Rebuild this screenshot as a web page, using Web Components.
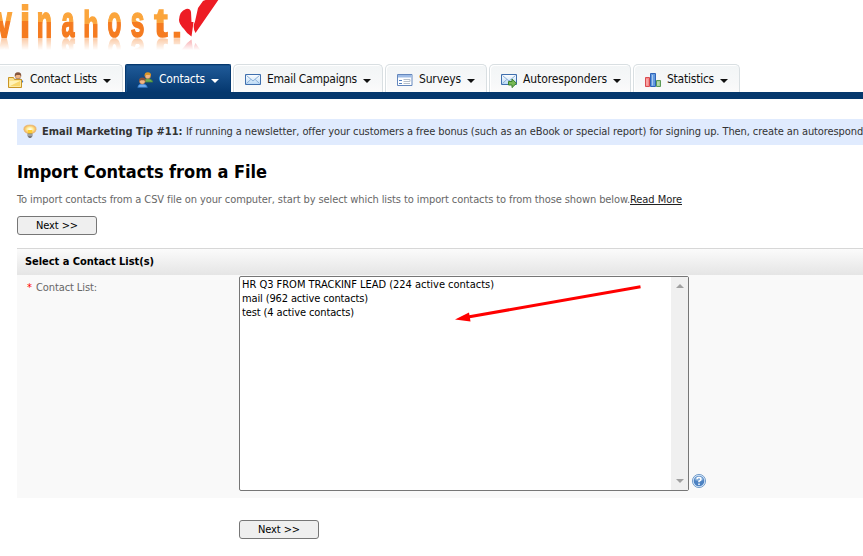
<!DOCTYPE html>
<html lang="en">
<head>
<meta charset="utf-8">
<title>Import Contacts from a File</title>
<style>
html,body{margin:0;height:100%;overflow:hidden;background:#fff}
body{font:11px/14px "DejaVu Sans Condensed","DejaVu Sans",sans-serif;font-stretch:condensed;color:#333}
</style>
</head>
<body>
<mail-page></mail-page>
<script>
const define = (name, html, ready) => customElements.define(name, class extends HTMLElement {
  connectedCallback() {
    if (this.shadowRoot) return;
    this.attachShadow({mode: 'open'}).innerHTML = html;
    if (ready) ready(this, this.shadowRoot);
  }
});

// One line of text whose tracking is adjusted to fill the width in "w".
define('fit-text', `<style>:host{display:block;white-space:pre;flex:none}span{display:inline-block}:host([underline]) span{text-decoration:underline;text-underline-offset:1px;text-decoration-skip-ink:none}</style><span><slot></slot></span>`, (el, root) => {
  const s = root.querySelector('span'), w = +el.getAttribute('w');
  el.style.width = w + 'px';
  const n = el.textContent.length;
  s.style.letterSpacing = ((w - s.getBoundingClientRect().width) / n) + 'px';
});

define('brand-logo', `<style>:host{display:block;height:64px}svg{display:block;overflow:visible;-webkit-box-reflect:below 0 linear-gradient(transparent 68%,rgba(0,0,0,.42))}text{font:bold 45px "Liberation Sans",sans-serif}</style>
<svg width="230" height="38" viewBox="0 0 230 38"><defs><linearGradient id="o" gradientUnits="userSpaceOnUse" x1="0" x2="0" y1="-38" y2="0"><stop offset="0" stop-color="#fba53c"/><stop offset=".58" stop-color="#fba53c"/><stop offset=".58" stop-color="#f57b20"/><stop offset="1" stop-color="#f57b20"/></linearGradient></defs>
<g id="letters" fill="url(#o)" stroke="url(#o)" stroke-width="1.8"></g>
<path fill="#ed1c24" d="M179 20Q179.500 11 186 9Q190 8 191 12L191.500 22L193.500 22L193 26L191.500 36.500Q187 34 184 29Q179 24 179 20ZM198 8L203 1Q206 -1 219 -1L195.500 33Q193 29 194 24L195 21.500Z"/></svg>`, (el, root) => {
  // letter, left, right, vertical scale, side bearing and ink width in ems
  const rows = [['v',-3,11.5,1,.01,.536],['i',22.5,27.5,1,.07,.137],['n',38.5,50.5,.98,.066,.48],['a',62.500,74.5,.97,.04,.515],['h',85,97,.84,.066,.48],['o',108.5,120.5,.97,.04,.53],['s',131.5,143.5,.97,.03,.49],['t',155,167,.91,.02,.3],['.',174.5,179.5,.7,.07,.14]];
  root.getElementById('letters').innerHTML = rows.map(([c,l,r,y,b,i]) => {
    const sx = (r-l)/(i*45);
    return `<text transform="translate(${l-b*45*sx} 37.2) scale(${sx} ${y})">${c}</text>`;
  }).join('');
});

const person = (x, y, hair, shirt, edge) => `<g transform="translate(${x} ${y})"><path d="M.5 10Q1 6.5 5 6.5Q9 6.5 10 10Z" fill="${shirt}" stroke="${edge}" stroke-width=".8"/><circle cx="5" cy="4" r="2.8" fill="#f1b785" stroke="#a86a40" stroke-width=".5"/><path d="M1.800 4.500Q1.300 .3 5 .3Q8.700 .3 8.200 4.500L7 2.900H3.500Z" fill="${hair}"/></g>`;
const mail = `<defs><linearGradient id="m" x2="0" y2="1"><stop stop-color="#fff"/><stop offset="1" stop-color="#b9d8f5"/></linearGradient></defs><path d="M.5 2.5H15.5V12.5H.5Z" fill="url(#m)" stroke="#3f6fae"/><path d="M1.5 3.5L8 9L14.5 3.5M1.5 11.5L5.8 7.5M14.5 11.5L10.2 7.5" fill="none" stroke="#8aafd8"/>`;
const icons = {
  lists: person(5,0,'#84563d','#6ca4e8','#3d73bd') + `<path d="M.5 5.5H5.5L6.5 7.5H13.5V15.5H.5Z" fill="#fbe38e" stroke="#c99425"/><path d="M1.5 9H12.5V14.5H1.5Z" fill="#fff2b8"/><path d="M2 14L12 9V14Z" fill="#f8d76d"/>`,
  people: person(5.8,0,'#db9727','#70ad54','#42833a') + person(.3,5.3,'#895139','#70adf0','#347bc9'),
  mail,
  form: `<path d="M.5 2.5H15V13.5H.5Z" fill="#fff" stroke="#6487bd"/><path d="M1 3H14.5V5.5H1Z" fill="#9fbce6"/><path d="M2 8.5H5M2 11.5H5" stroke="#537fc0"/><path d="M6.5 7.5H13V9.500H6.500M6.5 11.5H13" fill="none" stroke="#b6bfca"/>`,
  auto: mail + `<path d="M7.5 9.5H11V7L15.5 11.3L11 15.6V13H7.5Z" fill="#79b955" stroke="#3b822d"/>`,
  stats: `<path d="M.5 5.5H4.5V14.500H.5Z" fill="#f68a8a" stroke="#d94b50"/><path d="M5.5 1.500H10.500V14.500H5.5Z" fill="#639be0" stroke="#3064b8"/><path d="M11.500 8.5H15.5V14.500H11.500Z" fill="#a5d298" stroke="#5c9a55"/><path d="M2 7V13.5M7.500 3V13.5M13 10V13.500" stroke="#fff" stroke-opacity=".45"/>`,
  bulb: `<defs><radialGradient id="b"><stop stop-color="#fff"/><stop offset=".45" stop-color="#fff0a2"/><stop offset="1" stop-color="#f2ae55"/></radialGradient></defs><path d="M4.5 9.5Q.8 8 .8 5.2Q.8 1 7 1Q13.2 1 13.2 5.2Q13.2 8 9.5 9.5Z" fill="url(#b)" stroke="#e7ba7c" stroke-width=".7"/><path d="M4.7 6H9.3L9 10H5Z" fill="#ffce35"/><path d="M4.5 9.5H9.5V12L8 14H6L4.5 12Z" fill="#777"/><path d="M4.5 11H9.5" stroke="#ccc"/>`,
  help: `<circle cx="7" cy="7" r="6.6" fill="#d8e8f8" stroke="#5b8ac0" stroke-width=".8"/><circle cx="7" cy="7" r="5.3" fill="#4d82c2"/><path d="M2.5 6A4.6 4.6 0 0 1 11.5 6Q7 8 2.5 6Z" fill="#83acd9"/><path d="M5 5.2Q5 3.5 7 3.5Q9 3.5 9 5.2Q9 6.3 7 7.2V8.3M7 9.5V11" fill="none" stroke="#fff" stroke-width="1.5"/>`
};
define('ui-icon', `<style>:host{display:block;flex:none;width:16px;height:16px}svg{display:block;overflow:visible}</style>`, (el, root) => {
  root.innerHTML += `<svg width="16" height="16" viewBox="0 0 16 16">${icons[el.getAttribute('name')]}</svg>`;
});

define('nav-tab', `<style>
:host{display:flex;box-sizing:border-box;flex:none;height:28px;border:1px solid #d9dfe2;border-bottom:0;border-radius:5px 5px 0 0;background:linear-gradient(#f2f5f6,#f7f8f9 70%,#fbfbfb);box-shadow:inset 1px 1px #fff;color:#111;font-size:12px;padding-top:7px}
:host([active]){color:#fff;background:linear-gradient(#205b99,#05386f);border-color:#05386f;border-radius:2px 2px 0 0;box-shadow:inset 1px 1px #174f88}
fit-text{margin-left:6px}svg{margin:7px 0 0 6px}</style><ui-icon></ui-icon><fit-text></fit-text><svg width="8" height="4" viewBox="0 0 8 4"><path d="M0 0H8L4 4Z" fill="currentColor"/></svg>`, (el, root) => {
  const a = k => el.getAttribute(k);
  el.style.width = a('width') + 'px';
  el.style.paddingLeft = a('pad') + 'px';
  const icon = document.createElement('ui-icon'); icon.setAttribute('name', a('icon'));
  const text = document.createElement('fit-text'); text.setAttribute('w', a('w')); text.textContent = a('label');
  root.querySelector('ui-icon').replaceWith(icon);
  root.querySelector('fit-text').replaceWith(text);
});

define('main-nav', `<style>:host{display:flex;gap:2px;height:28px;border-bottom:7px solid #05386d}.first{margin-left:-5px}</style>
<nav-tab class="first" width="128" pad="12" icon="lists" w="67" label="Contact Lists"></nav-tab>
<nav-tab active width="106" pad="11" icon="people" w="46" label="Contacts"></nav-tab>
<nav-tab width="150" pad="11" icon="mail" w="90" label="Email Campaigns"></nav-tab>
<nav-tab width="102" pad="11" icon="form" w="42" label="Surveys"></nav-tab>
<nav-tab width="142" pad="11" icon="auto" w="84" label="Autoresponders"></nav-tab>
<nav-tab width="107" pad="11" icon="stats" w="47" label="Statistics"></nav-tab>`);

define('tip-bar', `<style>:host{display:flex;height:26px;background:#e0ebfe;margin:20px 0 0 17px;padding:0 0 0 6px;box-sizing:border-box;line-height:26px;overflow:hidden}ui-icon{margin:5px 3px 0 0}b{color:#333;font-weight:bold}</style>
<ui-icon name="bulb"></ui-icon><fit-text w="144"><b>Email Marketing Tip #11: </b></fit-text><fit-text w="677">If running a newsletter, offer your customers a free bonus (such as an eBook or special report) for signing up. Then, create an autorespond</fit-text>`);

define('next-button', `<style>:host{display:block}button{display:flex;box-sizing:border-box;width:80px;height:19px;margin:0;padding:2px 0 0 18px;border:1px solid #767676;border-radius:3px;background:#efefef;color:#000;font:inherit;font-stretch:inherit}</style><button><fit-text w="42">Next &gt;&gt;</fit-text></button>`);

define('contact-list', `<style>:host{display:flex;position:relative;box-sizing:border-box;width:450px;height:215px;border:1px solid #767676;border-radius:2px;background:#fff;color:#000}
.items{flex:1;padding:1px 0 0 2px}.bar{width:17px;background:#f0f0f0;display:flex;flex-direction:column;justify-content:space-between;align-items:center;padding:7px 0 7px;box-sizing:border-box}.arrow{position:absolute;left:215px;top:7px}svg{display:block}</style>
<div class="items"><fit-text w="252">HR Q3 FROM TRACKINF LEAD (224 active contacts)</fit-text><fit-text w="126">mail (962 active contacts)</fit-text><fit-text w="112">test (4 active contacts)</fit-text></div>
<div class="bar"><svg width="8" height="4"><path d="M0 4L4 0L8 4Z" fill="#a0a0a0"/></svg><svg width="8" height="4"><path d="M0 0L4 4L8 0Z" fill="#a0a0a0"/></svg></div>
<svg class="arrow" width="190" height="40"><path d="M13 33L185.500 2.800" stroke="red" stroke-width="3"/><path d="M0 35.5L14 28.5L15.5 37.5Z" fill="red"/></svg>`);

define('form-section', `<style>:host{display:block;margin:13px 0 0 17px}.head{height:27px;box-sizing:border-box;border-top:1px solid #d7d7d7;background:linear-gradient(#fbfbfb,#e5e5e5);padding:6px 0 0 8px;color:#000;font-weight:bold}.row{display:flex;height:223px;background:#f9f9f9;padding-top:1px;box-sizing:border-box}.label{display:flex;width:222px;padding:5px 0 0 10px;box-sizing:border-box;color:#676767}.req{color:red;width:9px}ui-icon{align-self:flex-end;margin:0 0 8px 3px}</style>
<div class="head"><fit-text w="129">Select a Contact List(s)</fit-text></div><div class="row"><div class="label"><span class="req">*</span><fit-text w="61">Contact List:</fit-text></div><contact-list></contact-list><ui-icon name="help"></ui-icon></div>`);

define('mail-page', `<style>:host{display:block;width:863px;height:556px;overflow:hidden}h1{margin:17px 0 0 17px;font-size:18px;line-height:20px;color:#000}p{display:flex;margin:11px 0 0 17px;color:#676767}a{color:#222}.top{margin:9px 0 0 17px}.bottom{margin:22px 0 0 239px}</style>
<brand-logo></brand-logo><main-nav></main-nav><tip-bar></tip-bar>
<h1><fit-text w="250">Import Contacts from a File</fit-text></h1>
<p><fit-text w="613">To import contacts from a CSV file on your computer, start by select which lists to import contacts to from those shown below.</fit-text><a><fit-text underline w="52">Read More</fit-text></a></p>
<next-button class="top"></next-button><form-section></form-section><next-button class="bottom"></next-button>`);
</script>
</body>
</html>
